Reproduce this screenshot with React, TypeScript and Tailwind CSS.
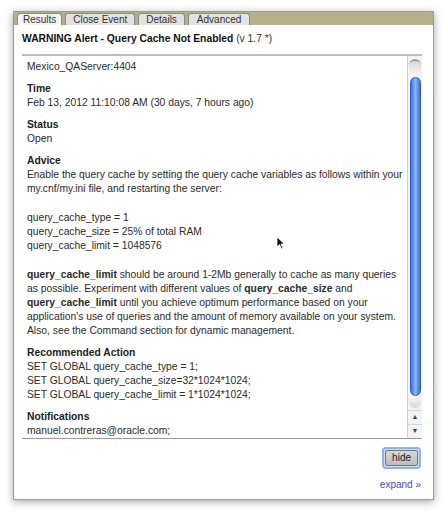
import React from "react";

const F = { fontFamily: '"Liberation Sans", Arial, sans-serif' };

function Section({ title, children }: { title: string; children: React.ReactNode }) {
  return (
    <div className="mt-[8px]">
      <div className="font-bold text-[#222]">{title}</div>
      {children}
    </div>
  );
}

export default function App() {
  return (
    <div className="w-[445px] h-[513px] bg-white overflow-hidden" style={F}>
      <div className="ml-[13px] mt-[11px] w-[421px] h-[489px] bg-white border border-[#9a9a9a] shadow-[0_2px_8px_rgba(0,0,0,0.35)] flex flex-col">
        {/* tab bar */}
        <div className="h-[13px] bg-[#b3b08b] flex items-end pl-[3px] gap-[3px] text-[10px] leading-[11px] text-[#333]">
          <div className="h-[12px] px-[5px] bg-[#f4f4f4] rounded-t-[3px] border border-b-0 border-[#8a8a8a] flex items-center">Results</div>
          <div className="h-[12px] px-[7px] bg-[#e2e2e2] rounded-t-[3px] border border-b-0 border-[#8a8a8a] flex items-center">Close Event</div>
          <div className="h-[12px] px-[7px] bg-[#e2e2e2] rounded-t-[3px] border border-b-0 border-[#8a8a8a] flex items-center">Details</div>
          <div className="h-[12px] px-[8px] bg-[#e2e2e2] rounded-t-[3px] border border-b-0 border-[#8a8a8a] flex items-center">Advanced</div>
        </div>
        {/* title */}
        <div className="pl-[8px] pt-[7px] h-[29px] text-[10.3px] leading-[13px] text-[#111] whitespace-nowrap">
          <span className="font-bold">WARNING Alert - Query Cache Not Enabled</span>
          <span className="text-[#333]"> (v 1.7 *)</span>
        </div>
        {/* content box */}
        <div className="ml-[8px] mr-[11px] h-[385px] border-t-2 border-b border-t-[#bdbdbd] border-b-[#9a9a9a] flex relative">
          <div className="flex-1 pl-[5px] pt-[4px] text-[10.3px] leading-[14px] text-[#2a2a2a] whitespace-nowrap overflow-hidden">
            <div>Mexico_QAServer:4404</div>
            <Section title="Time">
              <div>Feb 13, 2012 11:10:08 AM (30 days, 7 hours ago)</div>
            </Section>
            <Section title="Status">
              <div>Open</div>
            </Section>
            <Section title="Advice">
              <div>Enable the query cache by setting the query cache variables as follows within your</div>
              <div>my.cnf/my.ini file, and restarting the server:</div>
              <div className="h-[15px]" />
              <div>query_cache_type = 1</div>
              <div>query_cache_size = 25% of total RAM</div>
              <div>query_cache_limit = 1048576</div>
              <div className="h-[15px]" />
              <div><b>query_cache_limit</b> should be around 1-2Mb generally to cache as many queries</div>
              <div>as possible. Experiment with different values of <b>query_cache_size</b> and</div>
              <div><b>query_cache_limit</b> until you achieve optimum performance based on your</div>
              <div>application's use of queries and the amount of memory available on your system.</div>
              <div>Also, see the Command section for dynamic management.</div>
            </Section>
            <Section title="Recommended Action">
              <div>SET GLOBAL query_cache_type = 1;</div>
              <div>SET GLOBAL query_cache_size=32*1024*1024;</div>
              <div>SET GLOBAL query_cache_limit = 1*1024*1024;</div>
            </Section>
            <Section title="Notifications">
              <div>manuel.contreras@oracle.com;</div>
            </Section>
          </div>
          {/* scrollbar */}
          <div className="w-[15px] border-l border-[#d0d0d0] bg-[#f3f3f3] flex flex-col items-center">
            <div className="w-[12px] h-[18px] mt-[3px] rounded-t-full border-t-2 border-[#9a9a9a] bg-gradient-to-b from-[#d8d8d8] to-[#fafafa]" />
            <div className="w-[11px] flex-1 rounded-full bg-gradient-to-r from-[#3f74d9] via-[#8cb4f5] to-[#3a6fd6] border border-[#2f5fb8]" />
            <div className="w-[12px] h-[12px] mb-[2px] rounded-b-full bg-gradient-to-b from-[#fafafa] to-[#d5d5d5]" />
            <div className="h-[14px] w-full border-t border-[#d8d8d8] flex items-center justify-center text-[7px] text-[#444]">▲</div>
            <div className="h-[14px] w-full border-t border-[#d8d8d8] flex items-center justify-center text-[7px] text-[#444]">▼</div>
          </div>
          {/* cursor */}
          <svg className="absolute left-[254px] top-[180px]" width="10" height="14" viewBox="0 0 10 14">
            <path d="M1 1 L1 11 L3.5 8.5 L5.5 13 L7 12.3 L5 8 L8.5 8 Z" fill="#111" stroke="#fff" strokeWidth="0.8" />
          </svg>
        </div>
        {/* footer */}
        <div className="flex flex-col items-end pr-[12px] pt-[8px]">
          <div className="rounded-[4px] border-2 border-[#8db3e6] p-[1px] bg-[#cfe0f6]">
            <div className="h-[16px] px-[6px] bg-gradient-to-b from-[#d8d8d8] to-[#bdbdbd] border border-[#777] rounded-[2px] text-[10px] leading-[14px] text-[#222] flex items-center">hide</div>
          </div>
          <div className="mt-[8px] text-[10px] text-[#4a4ab8]">expand »</div>
        </div>
      </div>
    </div>
  );
}
